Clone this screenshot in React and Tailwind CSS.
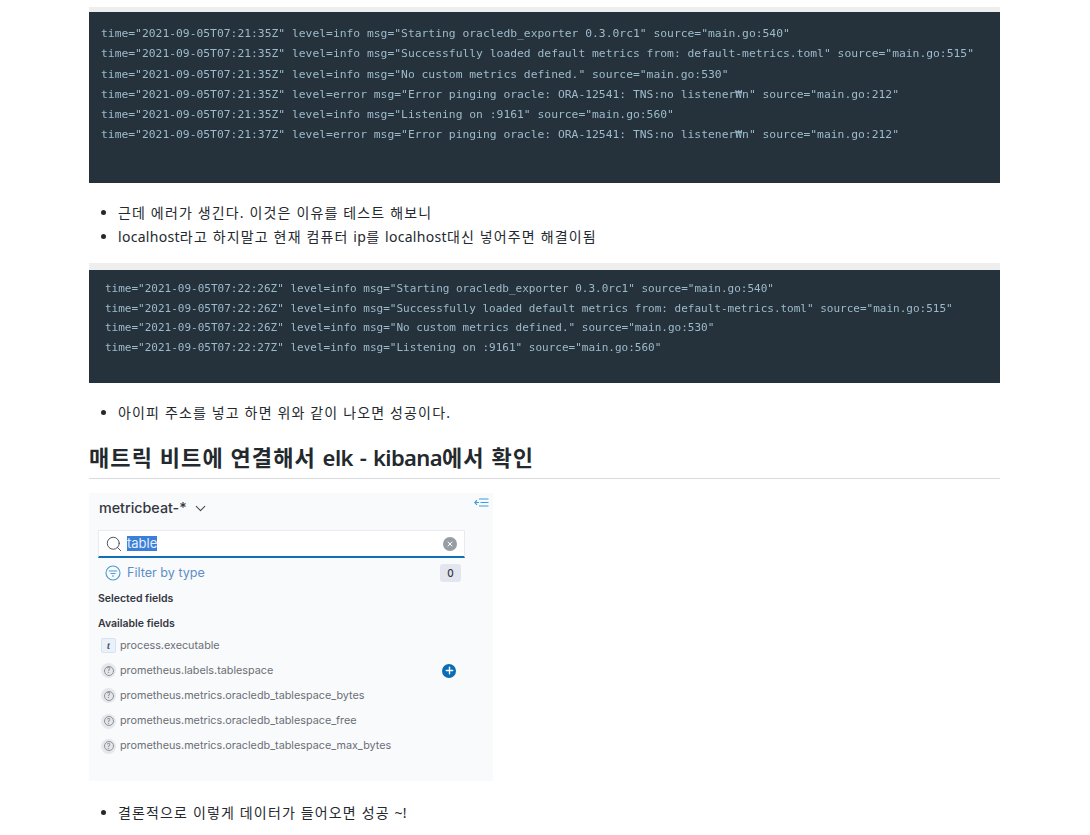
import { Search, ChevronDown, Plus, X } from 'lucide-react';

const bodyFont = "font-['Noto_Sans','Noto_Sans_CJK_KR',sans-serif]";

const firstLog = [
  'time="2021-09-05T07:21:35Z" level=info msg="Starting oracledb_exporter 0.3.0rc1" source="main.go:540"',
  'time="2021-09-05T07:21:35Z" level=info msg="Successfully loaded default metrics from: default-metrics.toml" source="main.go:515"',
  'time="2021-09-05T07:21:35Z" level=info msg="No custom metrics defined." source="main.go:530"',
  'time="2021-09-05T07:21:35Z" level=error msg="Error pinging oracle: ORA-12541: TNS:no listener₩n" source="main.go:212"',
  'time="2021-09-05T07:21:35Z" level=info msg="Listening on :9161" source="main.go:560"',
  'time="2021-09-05T07:21:37Z" level=error msg="Error pinging oracle: ORA-12541: TNS:no listener₩n" source="main.go:212"',
];

const secondLog = [
  'time="2021-09-05T07:22:26Z" level=info msg="Starting oracledb_exporter 0.3.0rc1" source="main.go:540"',
  'time="2021-09-05T07:22:26Z" level=info msg="Successfully loaded default metrics from: default-metrics.toml" source="main.go:515"',
  'time="2021-09-05T07:22:26Z" level=info msg="No custom metrics defined." source="main.go:530"',
  'time="2021-09-05T07:22:27Z" level=info msg="Listening on :9161" source="main.go:560"',
];

const fields = [
  'prometheus.labels.tablespace',
  'prometheus.metrics.oracledb_tablespace_bytes',
  'prometheus.metrics.oracledb_tablespace_free',
  'prometheus.metrics.oracledb_tablespace_max_bytes',
];

// the Korean runs are set wider than the latin ones in the picture
function Mixed({ text, koClass, enClass }) {
  return text.split(/([A-Za-z~!-]+)/).map((part, i) => (
    <span key={i} className={i % 2 ? enClass : koClass}>
      {part}
    </span>
  ));
}

function Bullets({ items, className }) {
  return (
    <ul className={`list-disc pl-[29px] text-[14px] leading-[24px] text-[#24292e] ${className}`}>
      {items.map((item) => (
        <li key={item}>
          <Mixed text={item} koClass="tracking-[1.15px]" enClass="tracking-[0.3px]" />
        </li>
      ))}
    </ul>
  );
}

function UnknownIcon() {
  return (
    <span className="flex h-[15px] w-[15px] shrink-0 items-center justify-center rounded-full bg-[#e6e7ea]">
      <span className="flex h-[10px] w-[10px] items-center justify-center rounded-full border border-[#8d9198] text-[7px] leading-none text-[#6f737a]">
        ?
      </span>
    </span>
  );
}

function FieldRow({ icon, name, action }) {
  return (
    <div className="flex h-[25.2px] items-center pl-[12px] pr-[37px] text-[10.8px] text-[#6a6e75]">
      {icon}
      <span className="ml-[4px] flex-1">{name}</span>
      {action}
    </div>
  );
}

function KibanaPanel() {
  return (
    <div className="h-[288px] w-[404px] bg-[#f9fafc] font-['Inter',sans-serif]">
      <div className="relative flex h-[30px] items-center pl-[10px] text-[14.3px] font-medium text-[#343741]">
        metricbeat-*
        <ChevronDown className="ml-[5px] h-[17px] w-[17px] text-[#454a53]" strokeWidth={1.5} />
        <svg className="absolute right-[4px] top-[3px] h-[13px] w-[15px]" viewBox="0 0 15 13" fill="none" stroke="#3d9be0" strokeWidth="1.2">
          <path d="M5 6.5H0.8M3 4.2 0.8 6.5 3 8.8M5 3h9.5M6.5 6.5h8M5 10h9.5" />
        </svg>
      </div>
      <div className="ml-[9px] mt-[7px] flex h-[28px] w-[367px] items-center border border-b-2 border-[#e9ebf0] border-b-[#0f6fb8] bg-white pl-[6px] pr-[7px]">
        <Search className="h-[18px] w-[18px] text-[#3f434b]" strokeWidth={1.2} />
        <span className="ml-[4px] bg-[#3a7fd9] text-[13px] leading-[15px] text-[#e4eefb]">table</span>
        <span className="ml-auto flex h-[14px] w-[14px] items-center justify-center rounded-full bg-[#989ca5]">
          <X className="h-[8px] w-[8px] text-white" strokeWidth={3} />
        </span>
      </div>
      <div className="flex h-[30px] items-center pl-[16px] pr-[32px]">
        <svg className="h-[16px] w-[16px]" viewBox="0 0 16 16" fill="none" stroke="#4a9ad0" strokeWidth="1.1">
          <circle cx="8" cy="8" r="7" />
          <path d="M3.8 6h8.4M5.5 8.5h5M7 11h2" />
        </svg>
        <span className="ml-[6px] text-[12.6px] text-[#5c8fc7]">Filter by type</span>
        <span className="ml-auto flex h-[18px] w-[21px] items-center justify-center rounded-[3px] bg-[#e3e6ee] text-[10px] font-medium text-[#343741]">
          0
        </span>
      </div>
      <p className="ml-[9px] mt-[3px] text-[10.5px] font-semibold leading-[16px] text-[#343741]">Selected fields</p>
      <p className="ml-[9px] mt-[9px] mb-[1px] text-[10.5px] font-semibold leading-[16px] text-[#343741]">Available fields</p>
      <FieldRow
        name="process.executable"
        icon={
          <span className="flex h-[15px] w-[15px] shrink-0 items-center justify-center rounded-[2px] border border-[#d5e3f2] bg-[#eaf1f9] font-['Liberation_Serif',serif] text-[10px] font-bold italic text-[#44546a]">
            t
          </span>
        }
      />
      {fields.map((name, i) => (
        <FieldRow
          key={name}
          name={name}
          icon={<UnknownIcon />}
          action={
            i === 0 && (
              <span className="flex h-[14px] w-[14px] items-center justify-center rounded-full bg-[#0b6db3]">
                <Plus className="h-[11px] w-[11px] text-white" strokeWidth={3} />
              </span>
            )
          }
        />
      ))}
    </div>
  );
}

function LogImage({ lines, className, textClass }) {
  return (
    <div className={`bg-[#25323b] font-['DejaVu_Sans_Mono',monospace] text-[#9dbacb] border-[#eeeeee] ${className}`}>
      {lines.map((line) => (
        <div key={line} className={`whitespace-pre blur-[0.3px] ${textClass}`}>
          {line}
        </div>
      ))}
    </div>
  );
}

export default function App() {
  return (
    <div className={`min-h-[835px] overflow-hidden bg-white pt-[7px] ${bodyFont}`}>
      <div className="ml-[89px] w-[911px]">
        <LogImage
          lines={firstLog}
          className="h-[176px] border-t-[5px] pl-[12px] pt-[11px]"
          textClass="text-[11.33px] leading-[20.3px]"
        />
        <Bullets
          className="mt-[18px]"
          items={['근데 에러가 생긴다. 이것은 이유를 테스트 해보니', 'localhost라고 하지말고 현재 컴퓨터 ip를 localhost대신 넣어주면 해결이됨']}
        />
        <LogImage
          lines={secondLog}
          className="mt-[14px] h-[120px] border-t-[7px] pl-[16px] pt-[9px]"
          textClass="text-[11px] leading-[19.7px]"
        />
        <Bullets className="mt-[18px]" items={['아이피 주소를 넣고 하면 위와 같이 나오면 성공이다.']} />
        <h2 className="mt-[18px] border-b border-[#d8dadd] pb-[6px] text-[22px] font-semibold leading-[29px] text-[#24292e]">
          <Mixed text="매트릭 비트에 연결해서 elk - kibana에서 확인" koClass="tracking-[1.08px]" enClass="tracking-[-0.6px]" />
        </h2>
        <div className="mt-[14px]">
          <KibanaPanel />
        </div>
        <Bullets className="mt-[20px]" items={['결론적으로 이렇게 데이터가 들어오면 성공 ~!']} />
      </div>
    </div>
  );
}
